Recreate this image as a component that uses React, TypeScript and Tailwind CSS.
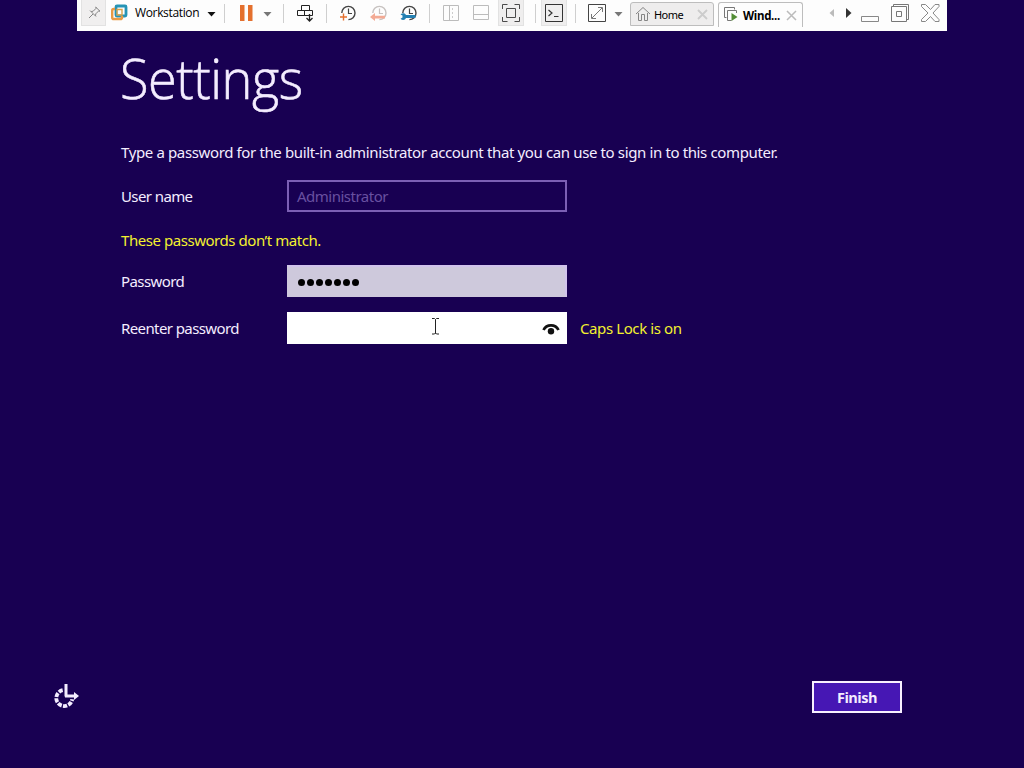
import type { ReactNode } from "react";

const Svg = ({ w, children }: { w: number; children: ReactNode }) => (
  <svg width={w} height={28} viewBox={`0 0 ${w} 28`} fill="none" stroke="#333" strokeWidth={1} className="block shrink-0 overflow-visible">
    {children}
  </svg>
);

const Sep = ({ className }: { className: string }) => (
  <div className={`${className} h-full shrink-0`}>
    <div className="mt-[4px] h-[19px] w-px bg-[#cfcfcf]" />
  </div>
);

const Caret = ({ w, color }: { w: number; color: string }) => (
  <Svg w={w}>
    <path d="M0.5 12h8l-4 4.5z" fill={color} stroke="none" />
  </Svg>
);

const Clock = ({ color }: { color: string }) => (
  <g stroke={color}>
    <path d="M2.800 13A6.600 6.600 0 1 1 9.400 19.600" strokeWidth="1.400" />
    <path d="M9.500 8.500V13.500H13" strokeWidth="1.200" />
  </g>
);

const Toolbar = () => (
  <header className="mx-[77px] flex h-[31px] shrink-0 items-start overflow-hidden bg-[#fdfdfd] pl-1 font-['Open_Sans','Noto_Sans',sans-serif] text-black">
    <div className="h-full w-[30px] shrink-0">
      <div className="h-[26px] w-[25px] border border-t-0 border-[#e2e2e2] bg-[#f0efef]">
        <Svg w={23}>
          <path d="M7 18l4-4M8 10.5l6 6M9.2 11.5l2-.3 3-3-.5-1.2 4.3 4.3-1.2-.5-3 3-.3 2" stroke="#858585" />
        </Svg>
      </div>
    </div>
    <Svg w={24}>
      <rect x="5" y="6" width="10" height="10" rx="1" stroke="#2594b5" strokeWidth="2.800" />
      <path d="M4 9H2.800Q1.200 9 1.200 10.600V17.400Q1.200 19 2.800 19H9.400Q11 19 11 17.400V16" stroke="#e99a43" strokeWidth="2.400" />
      <path d="M6 13v-3.500h5V15H6z" stroke="#d8a34d" strokeWidth="1.400" />
    </Svg>
    <div className="w-[72px] shrink-0 pt-[4px] text-[12px] leading-[18px] tracking-[-0.350px]">Workstation</div>
    <Caret w={17} color="#111" />
    <Sep className="w-[15px]" />
    <Svg w={24}>
      <path d="M1 5h4.500v16H1zM9 5h4.500v16H9z" fill="#e4702e" stroke="none" />
    </Svg>
    <Caret w={20} color="#777" />
    <Sep className="w-[14px]" />
    <Svg w={29}>
      <path d="M4.500 10V5.500h8V10M0.500 10.500h7v5h-7zM7.500 10.500h8v5h-8z" stroke="#222" />
      <path d="M12.500 14v7M9.500 18l3 3 3-3" stroke="#222" strokeWidth="1.300" />
    </Svg>
    <Sep className="w-[13px]" />
    <Svg w={31}>
      <Clock color="#444" />
      <path d="M1 17h7M4.500 13.500v7" stroke="#e4702e" strokeWidth="1.400" />
    </Svg>
    <Svg w={30}>
      <Clock color="#c7c2c0" />
      <path d="M0 17l5-4v2.800h10v2.600H5V21z" fill="#f3aa94" stroke="none" />
    </Svg>
    <Svg w={29}>
      <Clock color="#444" />
      <path d="M0.500 14.500l2 1v2l-2 1.200c2 2 4.500 1.500 5.500-.6h9.500v-3H6c-1-2.200-3.500-2.500-5.500-.6z" fill="#2480b2" stroke="none" />
    </Svg>
    <Sep className="w-[13px]" />
    <Svg w={30}>
      <path d="M1.500 5.500h15v15h-15zM7.500 5.500v15" stroke="#bcbcbc" />
      <path d="M10.500 8v10" stroke="#ccc" strokeDasharray="2 2" />
    </Svg>
    <Svg w={26}>
      <path d="M1.500 5.500h15v14h-15zM1.500 14.500h15" stroke="#bcbcbc" />
    </Svg>
    <div className="h-full w-[37px] shrink-0">
      <div className="h-[26px] w-[26px] border border-t-0 border-[#e2e2e2] bg-[#efeeee]">
        <Svg w={24}>
          <path d="M7.500 8.500h9v9h-9zM3.500 9V4.500h5M15.500 4.500h5V9M3.500 17v4.500h5M15.500 21.500h5V17" stroke="#4a4a4a" />
        </Svg>
      </div>
    </div>
    <Sep className="w-[6px]" />
    <div className="h-full w-[34px] shrink-0">
      <div className="h-[26px] w-[26px] border border-t-0 border-[#e2e2e2] bg-[#efeeee]">
        <Svg w={24}>
          <path d="M3.500 4.500h17v17h-17z" stroke="#333" />
          <path d="M6.500 10l3.500 3-3.500 3M12 16.500h4.500" stroke="#333" strokeWidth="1.200" />
        </Svg>
      </div>
    </div>
    <Sep className="w-[12px]" />
    <Svg w={27}>
      <path d="M1.500 4.500h17v17h-17z" stroke="#444" />
      <path d="M5 18L15 8M11 7.500h4.500V12M4.500 14v4.500H9" stroke="#777" />
    </Svg>
    <Caret w={16} color="#777" />
    <div className="h-full w-[88px] shrink-0 pt-[2px]">
      <div className="flex h-[24px] w-[84px] items-center rounded-t-[3px] border border-[#bdbdbd] bg-[#eeeded]">
        <Svg w={23}>
          <path d="M5 14l7-6.500 7 6.500M7.500 13v7.500h3v-6h3v6h3V13" stroke="#858585" />
        </Svg>
        <span className="w-[43px] pt-[2px] font-['Noto_Sans',sans-serif] text-[11px] tracking-[-0.900px]"><span className="inline-block origin-left tracking-[-0.550px]">Home</span></span>
        <Svg w={14}>
          <path d="M1 10l9 9M10 10l-9 9" stroke="#ccc" strokeWidth="1.800" />
        </Svg>
      </div>
    </div>
    <div className="h-full w-[111px] shrink-0 pt-[2px]">
      <div className="flex h-[25px] w-[85px] items-center rounded-t-[3px] border border-b-0 border-[#bdbdbd] bg-[#fdfdfd]">
        <Svg w={24}>
          <path d="M7.500 16.500h-2v-10h10v2" stroke="#777" />
          <path d="M17.500 12V9.500h-9v10h4" stroke="#777" />
          <path d="M12.500 12l6 4-6 4z" fill="#538d36" stroke="none" />
        </Svg>
        <span className="w-[43px] pt-[1px] font-['Noto_Sans',sans-serif] text-[11.500px] font-bold tracking-[-0.300px]">Wind...</span>
        <Svg w={14}>
          <path d="M1 10l9 9M10 10l-9 9" stroke="#bbb" strokeWidth="1.500" />
        </Svg>
      </div>
    </div>
    <Svg w={17}>
      <path d="M5 9v8l-4.500-4z" fill="#bbb" stroke="none" />
    </Svg>
    <Svg w={15}>
      <path d="M0 8v10l5.500-5z" fill="#333" stroke="none" />
    </Svg>
    <Svg w={30}>
      <path d="M0.500 16.500h17v5h-17z" stroke="#888" />
    </Svg>
    <Svg w={30}>
      <path d="M0.500 6.500h15v15h-15zM2.500 6.500v-2h15v15h-2M5.500 11.500h5v5h-5z" stroke="#777" />
    </Svg>
    <Svg w={20}>
      <path d="M0.500 4.500h4L9.500 9.500l4.500-5h4v2L12 13l6 6.500v2h-4l-4.500-5-5 5h-4v-2L7 13 0.500 6.500z" stroke="#888" />
    </Svg>
  </header>
);

const Label = ({ children }: { children: ReactNode }) => (
  <label className="w-[166px] shrink-0 tracking-[-0.600px]">{children}</label>
);

export default function App() {
  return (
    <div className="flex h-[768px] w-[1024px] flex-col overflow-hidden bg-[#180052] font-['Noto_Sans','Open_Sans',sans-serif] text-[15px] leading-[20px] text-[#f4edff]">
      <Toolbar />
      <main className="flex-1 pl-[121px]">
        <h1 className="mt-[11px] -ml-px h-[72px] w-[200px] origin-left scale-x-[0.95] font-['Open_Sans','Noto_Sans',sans-serif] text-[55px] leading-[72px] font-light tracking-[-0.500px] whitespace-nowrap [-webkit-text-stroke:0.600px_#f4edff]">Settings</h1>
        <p className="mt-[28px] whitespace-nowrap tracking-[-0.370px]">
          Type a password for the built-in administrator account that you can use to sign in to this computer.
        </p>
        <div className="mt-[18px] flex h-8 items-center">
          <Label>User name</Label>
          <div className="flex h-8 w-[280px] items-center border-2 border-[#7b5fb4] px-2 text-[#6850a0]">
            <span className="tracking-[-0.500px]">Administrator</span>
          </div>
        </div>
        <p className="mt-[18px] tracking-[-0.450px] text-[#f3f02f]">These passwords don’t match.</p>
        <div className="mt-[15px] flex h-8 items-center">
          <Label>Password</Label>
          <div className="flex h-8 w-[280px] items-center gap-[2px] border-2 border-[#d1c3ec] border-b-[#cec8dc] border-l-[#cec9dc] bg-[#cec9dc] pt-[3px] pl-[9px]">
            {[0, 1, 2, 3, 4, 5, 6].map((i) => (
              <span key={i} className="h-[7px] w-[7px] rounded-full bg-black" />
            ))}
          </div>
        </div>
        <div className="mt-[15px] flex h-8 items-center">
          <Label>Reenter password</Label>
          <div className="relative flex h-8 w-[280px] items-center justify-end bg-white pr-[7px]">
            <svg width="18" height="14" viewBox="0 0 18 14" fill="none" className="mt-[2px] block">
              <path d="M1.500 8C4.500 1.700 13.500 1.700 16.500 8" stroke="#111" strokeWidth="2.700" />
              <circle cx="9" cy="9.200" r="3.200" fill="#111" />
            </svg>
            <svg width="9" height="17" viewBox="0 0 9 17" fill="none" className="absolute top-[6px] left-[144px]">
              <path d="M1 .5h2.500l1 1 1-1H8M4.500 1.500v14M1 16h2.500l1-1 1 1H8" stroke="#222" />
            </svg>
          </div>
          <span className="ml-[13px] tracking-[-0.400px] text-[#f3f02f]">Caps Lock is on</span>
        </div>
      </main>
      <footer className="flex h-[87px] shrink-0 items-start justify-between pr-[122px] pl-[53px]">
        <svg width="27" height="26" viewBox="0 0 27 26" fill="none" stroke="#f4edff" className="mt-[2px]">
          <path d="M9.700 7.200A8 8 0 1 0 19.200 16.200" strokeWidth="3.800" strokeDasharray="4.200 1.300" />
          <path d="M13 1v12.500M12 13h11" strokeWidth="3" />
          <path d="M21 9l5 4-5 4z" fill="#f4edff" stroke="none" />
        </svg>
        <button className="h-8 w-[90px] border-2 border-[#f8f0ff] bg-[#4617b4] pt-px font-['Open_Sans','Noto_Sans',sans-serif] text-[14.500px] leading-[20px] font-bold tracking-[-0.500px]">Finish</button>
      </footer>
    </div>
  );
}
